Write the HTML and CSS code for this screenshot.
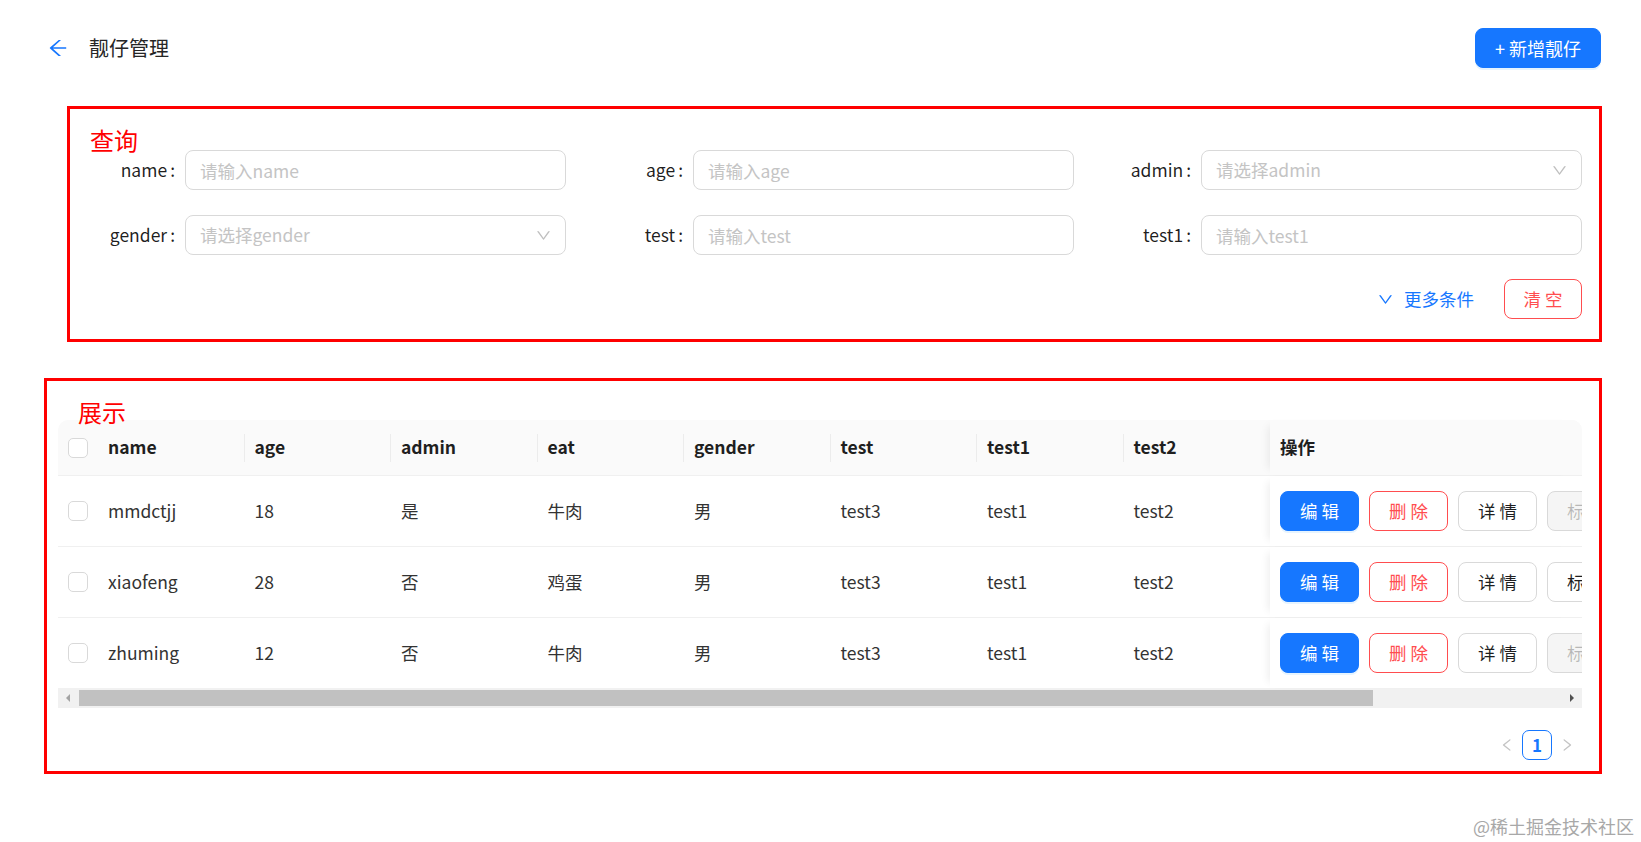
FILE: index.html
```html
<!DOCTYPE html>
<html lang="zh-CN">
<head>
<meta charset="utf-8">
<title>靓仔管理</title>
<link rel="stylesheet" href="styles.css">
</head>
<body>
<div class="page">
  <header class="topbar">
    <div class="topbar-left">
      <svg class="back-icon" viewBox="64 64 896 896" aria-hidden="true"><path d="M872 474H286.9l350.2-304c5.6-4.9 2.2-14-5.2-14h-88.5c-3.9 0-7.6 1.4-10.5 3.9L155 487.8a31.96 31.96 0 000 48.3L535.1 866c1.5 1.3 3.3 2 5.2 2h91.5c7.4 0 10.8-9.2 5.2-14L286.9 550H872c4.4 0 8-3.6 8-8v-60c0-4.4-3.6-8-8-8z"/></svg>
      <span class="page-title">靓仔管理</span>
    </div>
    <button class="btn btn-primary btn-add">+ 新增靓仔</button>
  </header>

  <section class="query-box">
    <div class="box-tag">查询</div>
    <div class="form-grid">
      <div class="form-item"><label class="form-label">name</label><input class="input" placeholder="请输入name"></div>
      <div class="form-item"><label class="form-label">age</label><input class="input" placeholder="请输入age"></div>
      <div class="form-item"><label class="form-label">admin</label><div class="input select"><span class="ph">请选择admin</span><svg class="sel-arrow" viewBox="64 64 896 896"><path d="M884 256h-75c-5.1 0-9.9 2.5-12.9 6.6L512 654.2 227.9 262.6c-3-4.1-7.8-6.6-12.9-6.6h-75c-6.5 0-10.3 7.4-6.5 12.7l352.6 486.1c12.8 17.6 39 17.6 51.7 0l352.6-486.1c3.9-5.3.1-12.7-6.4-12.7z"/></svg></div></div>
      <div class="form-item"><label class="form-label">gender</label><div class="input select"><span class="ph">请选择gender</span><svg class="sel-arrow" viewBox="64 64 896 896"><path d="M884 256h-75c-5.1 0-9.9 2.5-12.9 6.6L512 654.2 227.9 262.6c-3-4.1-7.8-6.6-12.9-6.6h-75c-6.5 0-10.3 7.4-6.5 12.7l352.6 486.1c12.8 17.6 39 17.6 51.7 0l352.6-486.1c3.9-5.3.1-12.7-6.4-12.7z"/></svg></div></div>
      <div class="form-item"><label class="form-label">test</label><input class="input" placeholder="请输入test"></div>
      <div class="form-item"><label class="form-label">test1</label><input class="input" placeholder="请输入test1"></div>
    </div>
    <div class="form-actions">
      <a class="more-link"><svg class="more-icon" viewBox="64 64 896 896"><path d="M884 256h-75c-5.1 0-9.9 2.5-12.9 6.6L512 654.2 227.9 262.6c-3-4.1-7.8-6.6-12.9-6.6h-75c-6.5 0-10.3 7.4-6.5 12.7l352.6 486.1c12.8 17.6 39 17.6 51.7 0l352.6-486.1c3.9-5.3.1-12.7-6.4-12.7z"/></svg><span>更多条件</span></a>
      <button class="btn btn-danger btn-clear">清 空</button>
    </div>
  </section>

  <section class="table-box">
    <div class="box-tag tag-table">展示</div>
    <div class="table">
      <div class="tr thead">
        <div class="td"><span class="checkbox"></span></div>
        <div class="td sep">name</div>
        <div class="td sep">age</div>
        <div class="td sep">admin</div>
        <div class="td sep">eat</div>
        <div class="td sep">gender</div>
        <div class="td sep">test</div>
        <div class="td sep">test1</div>
        <div class="td">test2</div>
        <div class="td td-action">操作</div>
      </div>
      <div class="tr trow">
        <div class="td"><span class="checkbox"></span></div>
        <div class="td">mmdctjj</div>
        <div class="td">18</div>
        <div class="td">是</div>
        <div class="td">牛肉</div>
        <div class="td">男</div>
        <div class="td">test3</div>
        <div class="td">test1</div>
        <div class="td">test2</div>
        <div class="td td-action">
          <button class="btn btn-primary">编 辑</button>
          <button class="btn btn-danger">删 除</button>
          <button class="btn btn-default">详 情</button>
          <button class="btn btn-disabled">标 记</button>
        </div>
      </div>
      <div class="tr trow">
        <div class="td"><span class="checkbox"></span></div>
        <div class="td">xiaofeng</div>
        <div class="td">28</div>
        <div class="td">否</div>
        <div class="td">鸡蛋</div>
        <div class="td">男</div>
        <div class="td">test3</div>
        <div class="td">test1</div>
        <div class="td">test2</div>
        <div class="td td-action">
          <button class="btn btn-primary">编 辑</button>
          <button class="btn btn-danger">删 除</button>
          <button class="btn btn-default">详 情</button>
          <button class="btn btn-default">标 记</button>
        </div>
      </div>
      <div class="tr trow">
        <div class="td"><span class="checkbox"></span></div>
        <div class="td">zhuming</div>
        <div class="td">12</div>
        <div class="td">否</div>
        <div class="td">牛肉</div>
        <div class="td">男</div>
        <div class="td">test3</div>
        <div class="td">test1</div>
        <div class="td">test2</div>
        <div class="td td-action">
          <button class="btn btn-primary">编 辑</button>
          <button class="btn btn-danger">删 除</button>
          <button class="btn btn-default">详 情</button>
          <button class="btn btn-disabled">标 记</button>
        </div>
      </div>
      <div class="hscroll">
        <span class="sb-btn sb-left"></span>
        <span class="sb-thumb"></span>
        <span class="sb-fill"></span>
        <span class="sb-btn sb-right"></span>
      </div>
    </div>
    <div class="pagination">
      <span class="pg-item pg-arrow"><svg viewBox="64 64 896 896"><path d="M724 218.3V141c0-6.7-7.7-10.4-12.9-6.3L260.3 486.8a31.86 31.86 0 000 50.3l450.8 352.1c5.3 4.1 12.9.4 12.9-6.3v-77.3c0-4.9-2.3-9.600-6.1-12.6l-360-281 360-281.1c3.8-3 6.1-7.7 6.1-12.6z"/></svg></span>
      <span class="pg-item pg-active">1</span>
      <span class="pg-item pg-arrow"><svg viewBox="64 64 896 896"><path d="M765.7 486.8L314.9 134.7A7.970 7.970 0 00302 141v77.3c0 4.9 2.3 9.6 6.1 12.6l360 281.1-360 281.1c-3.9 3-6.1 7.7-6.1 12.6V883c0 6.7 7.7 10.4 12.9 6.3l450.8-352.1a31.960 31.960 0 000-50.4z"/></svg></span>
    </div>
  </section>
</div>
<div class="watermark">@稀土掘金技术社区</div>
</body>
</html>
```

FILE: styles.css
```css
* { box-sizing: border-box; }

html, body {
  margin: 0;
  background: #fff;
}

body {
  font-family: "Noto Sans CJK SC", "Noto Sans", sans-serif;
  font-size: 17.5px;
  line-height: 1.5;
  color: rgba(0, 0, 0, 0.88);
}

.page {
  width: 1641px;
  padding-top: 28px;
}

/* ---------- top bar ---------- */
.topbar {
  display: flex;
  align-items: center;
  justify-content: space-between;
  height: 40px;
  padding: 0 40px 0 48px;
}

.topbar-left {
  display: flex;
  align-items: center;
}

.back-icon {
  width: 20px;
  height: 20px;
  fill: #1677ff;
  margin-right: 21px;
}

.page-title {
  font-size: 20px;
  line-height: 40px;
  color: #262626;
}

/* ---------- buttons ---------- */
.btn {
  font-family: inherit;
  font-size: 17.5px;
  line-height: 1;
  height: 40px;
  border-radius: 8px;
  border: 1px solid transparent;
  background: #fff;
  padding: 0 18px;
  flex-shrink: 0;
  cursor: pointer;
}

.btn-primary {
  background: #1677ff;
  border-color: #1677ff;
  color: #fff;
  box-shadow: 0 2px 0 rgba(5, 145, 255, 0.1);
}

.btn-danger {
  border-color: #ff4d4f;
  color: #ff4d4f;
}

.btn-default {
  border-color: #d9d9d9;
  color: rgba(0, 0, 0, 0.88);
}

.btn-disabled {
  border-color: #d9d9d9;
  background: #f5f5f5;
  color: rgba(0, 0, 0, 0.25);
}

.btn-add {
  width: 126px;
  padding: 0;
  font-size: 18px;
}

/* ---------- annotation boxes ---------- */
.query-box {
  position: relative;
  margin: 38px 0 0 67px;
  width: 1535px;
  border: 3px solid #ff0000;
  padding: 41px 17px 20px 10px;
}

.box-tag {
  position: absolute;
  left: 20px;
  top: 19px;
  font-size: 24px;
  line-height: 24px;
  color: #ff0000;
}

.tag-table {
  left: 31px;
  top: 19px;
}

/* ---------- form ---------- */
.form-grid {
  display: grid;
  grid-template-columns: repeat(3, 486px);
  column-gap: 22px;
  row-gap: 25px;
}

.form-item {
  display: flex;
  align-items: center;
  height: 40px;
}

.form-label {
  width: 105px;
  flex-shrink: 0;
  text-align: right;
  white-space: nowrap;
}

.form-label::after {
  content: ":";
  margin: 0 10px 0 3px;
}

.input {
  flex: 1;
  min-width: 0;
  height: 40px;
  border: 1px solid #d9d9d9;
  border-radius: 8px;
  padding: 0 14px;
  font-family: inherit;
  font-size: 17.5px;
  color: rgba(0, 0, 0, 0.88);
  background: #fff;
  outline: none;
}

.input::placeholder {
  color: #c4c4c4;
}

.select {
  display: flex;
  align-items: center;
  justify-content: space-between;
}

.ph {
  color: #c4c4c4;
}

.sel-arrow {
  width: 15px;
  height: 15px;
  fill: #bfbfbf;
}

.form-actions {
  display: flex;
  align-items: center;
  justify-content: flex-end;
  gap: 30px;
  margin-top: 24px;
}

.more-link {
  display: flex;
  align-items: center;
  gap: 11px;
  color: #1677ff;
  cursor: pointer;
}

.more-icon {
  width: 15px;
  height: 15px;
  fill: #1677ff;
}

.btn-clear {
  width: 78px;
  padding: 0;
}

/* ---------- table ---------- */
.table-box {
  position: relative;
  margin: 36px 0 0 44px;
  width: 1558px;
  border: 3px solid #ff0000;
  padding: 39px 17px 11px 11px;
}

.table {
  width: 1524px;
}

.tr {
  display: grid;
  grid-template-columns: 40px repeat(8, 146.5px) 1fr;
  border-bottom: 1px solid #f0f0f0;
}

.thead {
  height: 56px;
  background: #fafafa;
  border-radius: 10px 10px 0 0;
  font-weight: 600;
  color: #1f1f1f;
}

.trow {
  height: 71px;
  color: #333;
}

.td {
  display: flex;
  align-items: center;
  padding: 0 10px;
  white-space: nowrap;
  min-width: 0;
}

.thead .sep {
  background: linear-gradient(#ececec, #ececec) right center / 1px 28px no-repeat;
}

.td-action {
  gap: 10px;
  overflow: hidden;
  background: #fff;
  box-shadow: -8px 0 8px -6px rgba(5, 5, 5, 0.07);
}

.td-action .btn {
  width: 79px;
  padding: 0;
}

.thead .td-action {
  background: #fafafa;
  border-top-right-radius: 10px;
}

.checkbox {
  display: block;
  width: 20px;
  height: 20px;
  border: 1px solid #d9d9d9;
  border-radius: 5px;
  background: #fff;
}

/* fake horizontal scrollbar */
.hscroll {
  display: flex;
  align-items: center;
  height: 20px;
  background: #f1f1f1;
  margin-top: -1px;
}

.sb-btn {
  width: 20px;
  height: 20px;
  display: flex;
  align-items: center;
  justify-content: center;
  flex-shrink: 0;
}

.sb-btn::before {
  content: "";
  border-style: solid;
}

.sb-left::before {
  border-width: 4px 4px 4px 0;
  border-color: transparent #a3a3a3 transparent transparent;
}

.sb-right::before {
  border-width: 4px 0 4px 4px;
  border-color: transparent transparent transparent #505050;
}

.sb-thumb {
  width: 1294px;
  height: 16px;
  margin-left: 1px;
  background: #c1c1c1;
  flex-shrink: 0;
}

.sb-fill {
  flex: 1;
}

/* ---------- pagination ---------- */
.pagination {
  display: flex;
  justify-content: flex-end;
  margin-top: 22px;
}

.pg-item {
  width: 30px;
  height: 30px;
  display: flex;
  align-items: center;
  justify-content: center;
  font-size: 17px;
}

.pg-arrow svg {
  width: 14px;
  height: 14px;
  fill: #c4c4c4;
}

.pg-active {
  border: 1px solid #1677ff;
  border-radius: 7px;
  color: #1677ff;
  font-weight: 700;
}

/* ---------- watermark ---------- */
.watermark {
  position: absolute;
  right: 7px;
  top: 814px;
  font-size: 18px;
  line-height: 24px;
  color: #a8a8a8;
}
```
